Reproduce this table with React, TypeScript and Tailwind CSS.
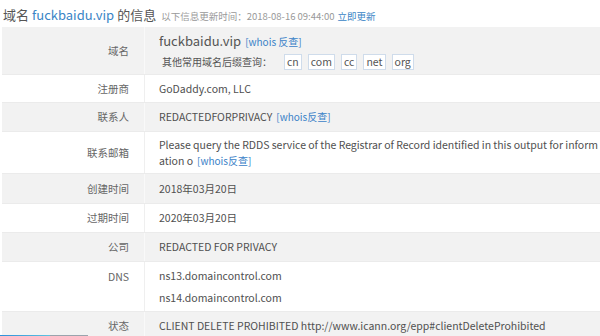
import React from "react";

const font = { fontFamily: '"Noto Sans CJK SC", "Noto Sans", sans-serif' };

function Row({
  label,
  gray,
  h,
  top,
  children,
}: {
  label: string;
  gray?: boolean;
  h: string;
  top?: boolean;
  children: React.ReactNode;
}) {
  return (
    <div
      className={`flex border-b ${gray ? "bg-[#f2f2f2] border-[#ebebeb]" : "bg-white border-[#ebebeb]"} ${h}`}
    >
      <div
        className={`w-[143px] shrink-0 flex justify-end pr-[15px] text-[10.5px] text-[#666] border-r ${top ? "items-start pt-[4px] leading-[22px]" : "items-center"} ${gray ? "border-[#f9f9f9]" : "border-[#efefef]"}`}
      >
        {label}
      </div>
      <div className="flex-1 flex flex-col justify-center pl-[14px] text-[10.5px] text-[#505050] whitespace-nowrap">
        {children}
      </div>
    </div>
  );
}

const Link = ({ children }: { children: React.ReactNode }) => (
  <span className="text-[#3b82c8] text-[10px] ml-[4px]">{children}</span>
);

const Box = ({ children }: { children: React.ReactNode }) => (
  <span className="inline-flex items-center justify-center h-[16px] px-[2px] border border-[#cfdceb] bg-white text-[10.5px] text-[#555] mr-[6px]">
    {children}
  </span>
);

export default function App() {
  return (
    <div className="w-[600px] h-[336px] overflow-hidden bg-white relative" style={font}>
      <div className="h-[27px] flex items-center pl-[3px] pt-[3px] whitespace-nowrap">
        <span className="text-[13px] text-[#555]">域名</span>
        <span className="text-[13px] text-[#3a85c6] ml-[3px]">fuckbaidu.vip</span>
        <span className="text-[13px] text-[#555] ml-[3px]">的信息</span>
        <span className="text-[9.5px] text-[#999] ml-[5px] mt-[2px]">以下信息更新时间：2018-08-16 09:44:00</span>
        <span className="text-[9.5px] text-[#3a85c6] ml-[3px] mt-[2px]">立即更新</span>
      </div>
      <div className="ml-[2px] w-[700px]">
        <Row label="域名" gray h="h-[48px]">
          <div className="flex items-baseline">
            <span className="text-[13px] text-[#555]">fuckbaidu.vip</span>
            <Link>[whois 反查]</Link>
          </div>
          <div className="flex items-center mt-[3px] pl-[3px]">
            <span className="text-[10px] text-[#555] mr-[12px]">其他常用域名后缀查询：</span>
            <Box>cn</Box>
            <Box>com</Box>
            <Box>cc</Box>
            <Box>net</Box>
            <Box>org</Box>
          </div>
        </Row>
        <Row label="注册商" h="h-[28px]">
          <span>GoDaddy.com, LLC</span>
        </Row>
        <Row label="联系人" gray h="h-[29px]">
          <div>
            <span>REDACTEDFORPRIVACY</span>
            <Link>[whois反查]</Link>
          </div>
        </Row>
        <Row label="联系邮箱" h="h-[42px]">
          <div className="leading-[16px] tracking-[-0.03px]">
            Please query the RDDS service of the Registrar of Record identified in this output for inform
          </div>
          <div className="leading-[16px]">
            ation o<Link>[whois反查]</Link>
          </div>
        </Row>
        <Row label="创建时间" gray h="h-[30px]">
          <span>2018年03月20日</span>
        </Row>
        <Row label="过期时间" h="h-[29px]">
          <span>2020年03月20日</span>
        </Row>
        <Row label="公司" gray h="h-[29px]">
          <span>REDACTED FOR PRIVACY</span>
        </Row>
        <Row label="DNS" h="h-[50px]" top>
          <div className="leading-[22px]">ns13.domaincontrol.com</div>
          <div className="leading-[22px]">ns14.domaincontrol.com</div>
        </Row>
        <Row label="状态" gray h="h-[29px]">
          <span>CLIENT DELETE PROHIBITED http://www.icann.org/epp#clientDeleteProhibited</span>
        </Row>
      </div>
      <div className="absolute left-0 bottom-0 h-[1px] w-[88px] flex">
        <div className="w-[50px] bg-gradient-to-r from-[#2f8fd8] to-[#5ec3e0]" />
        <div className="flex-1 bg-[#9aa4ad]" />
      </div>
    </div>
  );
}
